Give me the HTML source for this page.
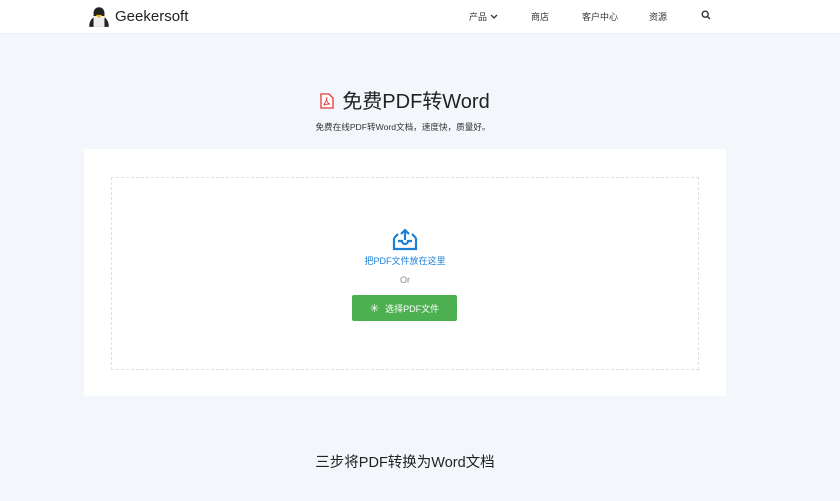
<!DOCTYPE html>
<html><head><meta charset="utf-8"><style>
*{margin:0;padding:0;box-sizing:border-box}
body{width:840px;height:501px;overflow:hidden;background:#f3f6fa;font-family:"Liberation Sans","Noto Sans CJK SC",sans-serif;color:#333}
.nav{position:absolute;left:0;top:0;width:840px;height:34px;background:#fff;border-bottom:1px solid #eceff3}
.logo{position:absolute;left:87px;top:4px;display:flex;align-items:center}
.logo span{font-size:15px;color:#222;margin-left:4px}
.menu{position:absolute;top:10px;font-size:9px;color:#333}
h1{position:absolute;left:0;width:810px;top:85px;text-align:center;font-size:20px;font-weight:normal;color:#222}
.sub{position:absolute;left:0;width:806px;top:121px;text-align:center;font-size:8.6px;color:#333}
.card{position:absolute;left:84px;top:149px;width:642px;height:247px;background:#fff}
.drop{position:absolute;left:111px;top:177px;width:588px;height:193px;border:1px dashed #dde1e6}
.btn{position:absolute;left:352px;top:295px;width:105px;height:26px;background:#4caf50;border-radius:2px;color:#fff;font-size:9px;display:flex;align-items:center;justify-content:center}
h2{position:absolute;left:0;width:810px;top:451px;text-align:center;font-size:14.5px;font-weight:normal;color:#222}
</style></head><body>
<div class="nav">
<div class="logo"><svg width="24" height="24" viewBox="0 0 22 22"><path d="M6 8a5 5 0 0 1 10 0v3H6z" fill="#222"/><path d="M2 21c0-6 3-10 9-10s9 4 9 10z" fill="#222"/><rect x="6" y="11" width="10" height="10" fill="#eee"/><path d="M8 10h6l-3 3z" fill="#f5b800"/></svg><span>Geekersoft</span></div>
<div class="menu" style="left:469px">产品 <svg width="8" height="6" viewBox="0 0 8 6"><path d="M1 1l3 3 3-3" stroke="#333" fill="none" stroke-width="1.3"/></svg></div>
<div class="menu" style="left:531px">商店</div>
<div class="menu" style="left:582px">客户中心</div>
<div class="menu" style="left:649px">资源</div>
<div class="menu" style="left:701px"><svg width="10" height="10" viewBox="0 0 10 10"><circle cx="4.2" cy="4.2" r="3" stroke="#333" fill="none" stroke-width="1.4"/><path d="M6.5 6.5l2.5 2.5" stroke="#333" stroke-width="1.4"/></svg></div>
</div>
<h1><svg width="14" height="16" viewBox="0 0 14 16" style="vertical-align:-1px;margin-right:8px"><path d="M1 1h8l4 4v10H1z" fill="#fff" stroke="#e53935" stroke-width="1.3"/><path d="M4 12c2-4 3-6 3-7s-1 0 0 3 3 3 3 3-4 0-6 1z" fill="none" stroke="#e53935" stroke-width="0.9"/></svg>免费PDF转Word</h1>
<div class="sub">免费在线PDF转Word文档，速度快，质量好。</div>
<div class="card"></div>
<div class="drop"></div>
<svg style="position:absolute;left:391px;top:227px" width="28" height="24" viewBox="0 0 28 24"><path d="M3 11v11h22V11" fill="none" stroke="#1a7fd6" stroke-width="2.2"/><path d="M3 11l4-4M25 11l-4-4" stroke="#1a7fd6" stroke-width="2.2"/><path d="M7 14h4a3 3 0 0 0 6 0h4" fill="none" stroke="#1a7fd6" stroke-width="2.2"/><path d="M14 13V3M10 7l4-4 4 4" fill="none" stroke="#1a7fd6" stroke-width="2.2"/></svg>
<div style="position:absolute;left:0;width:810px;top:254px;text-align:center;font-size:9px;color:#1a7fd6">把PDF文件放在这里</div>
<div style="position:absolute;left:0;width:810px;top:275px;text-align:center;font-size:9px;color:#888">Or</div>
<div class="btn"><span style="font-size:11px;margin-right:6px">✳</span>选择PDF文件</div>
<h2>三步将PDF转换为Word文档</h2>
</body></html>
